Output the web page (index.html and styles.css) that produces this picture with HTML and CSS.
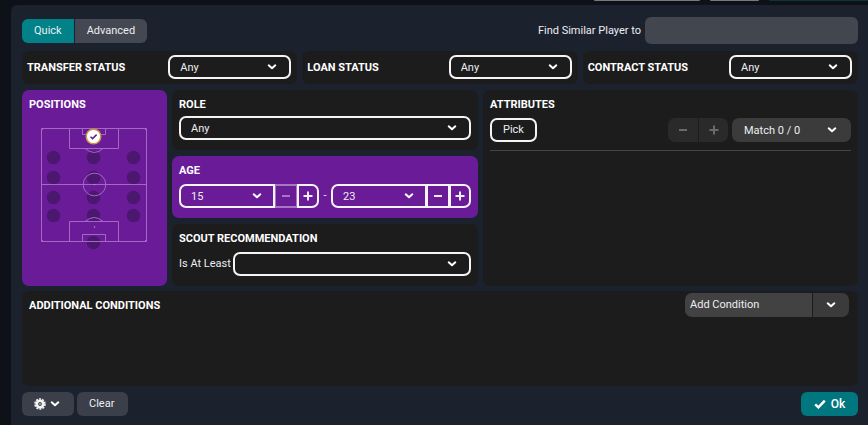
FILE: index.html
```html
<!DOCTYPE html>
<html lang="en">
<head>
<meta charset="utf-8">
<meta name="viewport" content="width=device-width, initial-scale=1">
<title>Player Search</title>
<link rel="stylesheet" href="styles.css">
</head>
<body>
<svg class="defs" aria-hidden="true">
  <symbol id="chevron" viewBox="0 0 10 8"><path d="M1.7 2.3 5 5.3 8.3 2.3" fill="none" stroke="currentColor" stroke-width="2" stroke-linecap="round" stroke-linejoin="round"/></symbol>
  <symbol id="minus" viewBox="0 0 10 10"><path d="M1 5h8" fill="none" stroke="currentColor" stroke-width="2"/></symbol>
  <symbol id="plus" viewBox="0 0 10 10"><path d="M.5 5h9M5 .5v9" fill="none" stroke="currentColor" stroke-width="2"/></symbol>
</svg>
<div class="backdrop" aria-hidden="true"><span class="stub wide"></span><span class="stub"></span><span class="stub teal"></span></div>
<main class="dialog">
  <header class="top">
    <div class="tabs">
      <button class="tab active" type="button">Quick</button>
      <button class="tab" type="button">Advanced</button>
    </div>
    <label class="similar">Find Similar Player to <input class="search" type="text"></label>
  </header>

  <section class="statuses">
    <div class="status card">
      <label class="title" for="transfer">TRANSFER STATUS</label>
      <span class="picker"><select id="transfer"><option>Any</option></select><svg class="chevron"><use href="#chevron"/></svg></span>
    </div>
    <div class="status card">
      <label class="title" for="loan">LOAN STATUS</label>
      <span class="picker"><select id="loan"><option>Any</option></select><svg class="chevron"><use href="#chevron"/></svg></span>
    </div>
    <div class="status card">
      <label class="title" for="contract">CONTRACT STATUS</label>
      <span class="picker"><select id="contract"><option>Any</option></select><svg class="chevron"><use href="#chevron"/></svg></span>
    </div>
  </section>

  <div class="filters">
    <section class="card block purple">
      <h2 class="title">POSITIONS</h2>
      <svg class="pitch" viewBox="29 120 131 130" role="img" aria-label="Pitch positions">
        <g class="spots">
          <circle cx="53.5" cy="157.5" r="6.8"/><circle cx="93.5" cy="157.5" r="6.8"/><circle cx="133.5" cy="157.5" r="6.8"/>
          <circle cx="53.5" cy="177.5" r="6.8"/><circle cx="93.5" cy="177.5" r="6.8"/><circle cx="133.5" cy="177.5" r="6.8"/>
          <circle cx="53.5" cy="197.5" r="6.8"/><circle cx="93.5" cy="197.5" r="6.8"/><circle cx="133.5" cy="197.5" r="6.8"/>
          <circle cx="53.5" cy="215.5" r="6.8"/><circle cx="93.5" cy="215.5" r="6.8"/><circle cx="133.5" cy="215.5" r="6.8"/>
          <circle cx="93.5" cy="242.5" r="6.8"/>
        </g>
        <g class="lines">
          <path d="M41.5 128.5h105v113h-105zM41.5 184.5h105"/>
          <path d="M69.5 128.5v20h49v-20M82.5 128.5v6h23v-6"/>
          <path d="M69.5 241.5v-20h49v20M82.5 241.5v-7h23v7"/>
          <path d="M85 148.5q9.5 8 18 0M85 221.5q9.5-8 18 0"/>
          <circle cx="94.5" cy="184.5" r="11.3"/>
          <path d="M41.5 130.5l2-2M144.5 128.5l2 2M41.5 239.5l2 2M144.5 241.5l2-2"/>
        </g>
        <g class="marks"><circle cx="94.5" cy="184.5" r=".8"/><circle cx="94.5" cy="227" r=".8"/></g>
        <circle class="chosen" cx="93.5" cy="136.5" r="7.3"/>
        <path class="tick" d="M90.5 136.7l2.1 1.9 4-4"/>
      </svg>
    </section>

    <div class="middle">
      <section class="card block tight">
        <label class="title" for="role">ROLE</label>
        <span class="picker"><select id="role"><option>Any</option></select><svg class="chevron"><use href="#chevron"/></svg></span>
      </section>
      <section class="card block purple">
        <h2 class="title">AGE</h2>
        <div class="ages">
          <div class="stepper">
            <span class="picker"><select aria-label="Minimum age"><option>15</option></select><svg class="chevron"><use href="#chevron"/></svg></span>
            <button class="step" type="button" disabled aria-label="Decrease minimum age"><svg><use href="#minus"/></svg></button>
            <button class="step last" type="button" aria-label="Increase minimum age"><svg><use href="#plus"/></svg></button>
          </div>
          <span class="dash">-</span>
          <div class="stepper">
            <span class="picker"><select aria-label="Maximum age"><option>23</option></select><svg class="chevron"><use href="#chevron"/></svg></span>
            <button class="step" type="button" aria-label="Decrease maximum age"><svg><use href="#minus"/></svg></button>
            <button class="step last" type="button" aria-label="Increase maximum age"><svg><use href="#plus"/></svg></button>
          </div>
        </div>
      </section>
      <section class="card block">
        <h2 class="title">SCOUT RECOMMENDATION</h2>
        <div class="scout">
          <label for="scout">Is At Least</label>
          <span class="picker"><select id="scout"><option></option></select><svg class="chevron"><use href="#chevron"/></svg></span>
        </div>
      </section>
    </div>

    <section class="card block">
      <h2 class="title">ATTRIBUTES</h2>
      <div class="attributes">
        <button class="pick" type="button">Pick</button>
        <div class="pair">
          <button type="button" disabled aria-label="Fewer matches"><svg><use href="#minus"/></svg></button>
          <button type="button" disabled aria-label="More matches"><svg><use href="#plus"/></svg></button>
        </div>
        <span class="picker solid"><select aria-label="Match"><option>Match 0 / 0</option></select><svg class="chevron"><use href="#chevron"/></svg></span>
      </div>
    </section>
  </div>

  <section class="card additional">
    <h2 class="title">ADDITIONAL CONDITIONS</h2>
    <div class="split">
      <button class="add" type="button">Add Condition</button>
      <button class="more" type="button" aria-label="Condition list"><svg class="arrow"><use href="#chevron"/></svg></button>
    </div>
  </section>

  <footer class="bottom">
    <button class="action options" type="button" aria-label="Options">
      <svg class="gear" viewBox="0 0 12 12"><circle cx="6" cy="6" r="5" fill="none" stroke="currentColor" stroke-width="1.6" stroke-dasharray="2 1.14"/><circle cx="6" cy="6" r="3.2" fill="none" stroke="currentColor" stroke-width="2.6"/><circle cx="6" cy="6" r=".8" fill="currentColor"/></svg>
      <svg class="arrow"><use href="#chevron"/></svg>
    </button>
    <button class="action" type="button">Clear</button>
    <button class="action ok" type="button"><svg class="check" viewBox="0 0 12 10"><path d="M1.2 5.3l3.2 3 6.4-6.6" fill="none" stroke="currentColor" stroke-width="2.5"/></svg>Ok</button>
  </footer>
</main>
</body>
</html>
```
FILE: styles.css
```css
* { box-sizing: border-box; }

body {
  margin: 0;
  min-height: 100vh;
  display: flex;
  flex-direction: column;
  background: #0e1118;
  color: #eceef1;
  font: 11px/16px Roboto, "Liberation Sans", sans-serif;
}

button, select, input { font: inherit; color: inherit; margin: 0; }
button {
  display: inline-flex;
  align-items: center;
  justify-content: center;
  height: 24px;
  padding: 0;
  border: 0;
}

.defs { position: absolute; width: 0; height: 0; }

.backdrop { display: flex; justify-content: flex-end; gap: 10px; height: 5px; }
.stub { width: 49px; height: 1px; background: #777a7e; border-radius: 0 0 4px 4px; }
.stub.wide { width: 106px; }
.stub.teal { width: 99px; background: #10343b; }

.dialog {
  flex: 1;
  display: flex;
  flex-direction: column;
  margin-left: 11px;
  padding: 12px 10px 9px 11px;
  background: #1c212e;
  border-top-left-radius: 6px;
}

.top { display: flex; align-items: center; justify-content: space-between; }
.tabs { display: flex; gap: 1px; }
.tab { padding: 0 12px; background: #444852; border-radius: 0 6px 6px 0; }
.tab.active { background: #008288; border-radius: 6px 0 0 6px; }
.similar { display: flex; align-items: center; gap: 4px; }
.search {
  width: 213px;
  height: 27px;
  padding: 0 8px;
  border: 0;
  border-radius: 6px;
  background: #42464f;
}

.card { background: #1c1c1d; border-radius: 7px; }
.card.purple { background: #6a1b98; }
.title { margin: 0; color: #fff; font-size: 11px; font-weight: 700; line-height: 16px; }

.statuses {
  display: grid;
  grid-template-columns: repeat(3, 1fr);
  gap: 5px;
  margin-top: 7px;
}
.status {
  display: flex;
  align-items: center;
  justify-content: space-between;
  padding: 4px 6px 5px 5px;
}
.status .title { padding-top: 2px; }
.status .picker { width: 123px; }

.picker { position: relative; display: block; }
.picker select {
  display: block;
  appearance: none;
  width: 100%;
  height: 24px;
  padding: 1px 24px 0 10px;
  border: 2px solid #f4f4f5;
  border-radius: 7px;
  background: transparent;
}
.chevron {
  position: absolute;
  right: 14px;
  top: 8px;
  width: 10px;
  height: 8px;
  color: #fff;
  pointer-events: none;
}
.arrow { width: 10px; height: 8px; color: #fff; }

.filters {
  display: grid;
  grid-template-columns: 145px 306px 1fr;
  gap: 5px;
  margin-top: 6px;
}
.block { display: flex; flex-direction: column; gap: 5px; padding: 7px 7px 10px; }
.block.tight { gap: 3px; }
.middle { display: grid; gap: 6px; }

.pitch { width: 100%; margin-top: 2px; }
.spots { fill: #4b176f; }
.lines { fill: none; stroke: #a468c2; stroke-width: 1; }
.marks { fill: #b98bd0; }
.chosen { fill: #fff; stroke: #c99443; stroke-width: 1.5px; }
.tick { fill: none; stroke: #6a1b98; stroke-width: 1.5px; }

.ages { display: flex; align-items: center; }
.stepper { flex: 1; display: flex; }
.stepper .picker { flex: 1; }
.stepper select { border-radius: 7px 0 0 7px; }
.stepper .chevron { right: 13px; }
.step {
  width: 22px;
  border: 2px solid #f4f4f5;
  border-left-width: 1px;
  border-right-width: 1px;
  background: transparent;
}
.step:disabled { border-color: #a778c1; color: #a778c1; }
.step.last { border-width: 2px; border-radius: 0 7px 7px 0; }
.step svg, .pair svg { width: 10px; height: 10px; }
.dash { width: 12px; text-align: center; }

.scout { display: flex; align-items: center; gap: 2px; white-space: nowrap; }
.scout .picker { flex: 1; }

.attributes {
  display: flex;
  align-items: center;
  gap: 4px;
  padding-bottom: 8px;
  border-bottom: 1px solid #454547;
}
.pick { padding: 0 11px; border: 2px solid #f4f4f5; border-radius: 7px; background: transparent; }
.pair { display: flex; gap: 1px; margin-left: auto; }
.pair button { width: 30px; background: #2a2a2b; color: #6a6a6b; border-radius: 7px 0 0 7px; }
.pair button + button { width: 29px; border-radius: 0 7px 7px 0; }
.solid { width: 119px; }
.solid select { border-color: #3b3b3c; background: #3b3b3c; }

.additional {
  flex: 1;
  display: flex;
  align-items: flex-start;
  justify-content: space-between;
  margin-top: 5px;
  padding: 2px 9px 2px 7px;
}
.additional .title { padding-top: 5px; }
.split { display: flex; gap: 1px; }
.add {
  width: 127px;
  justify-content: flex-start;
  padding: 0 5px;
  background: #424243;
  border-radius: 7px 0 0 7px;
}
.more { width: 36px; background: #3b3b3c; border-radius: 0 7px 7px 0; }

.bottom { display: flex; gap: 3px; margin-top: 6px; }
.action { padding: 0 14px 0 12px; background: #3a3f49; border-radius: 6px; }
.options { gap: 4px; }
.gear { width: 12px; height: 12px; color: #f4f4f5; }
.action.ok { width: 57px; gap: 5px; margin-left: auto; padding: 0; background: #00777f; color: #fff; font-size: 12px; font-weight: 500; }
.check { width: 12px; height: 10px; }
```
